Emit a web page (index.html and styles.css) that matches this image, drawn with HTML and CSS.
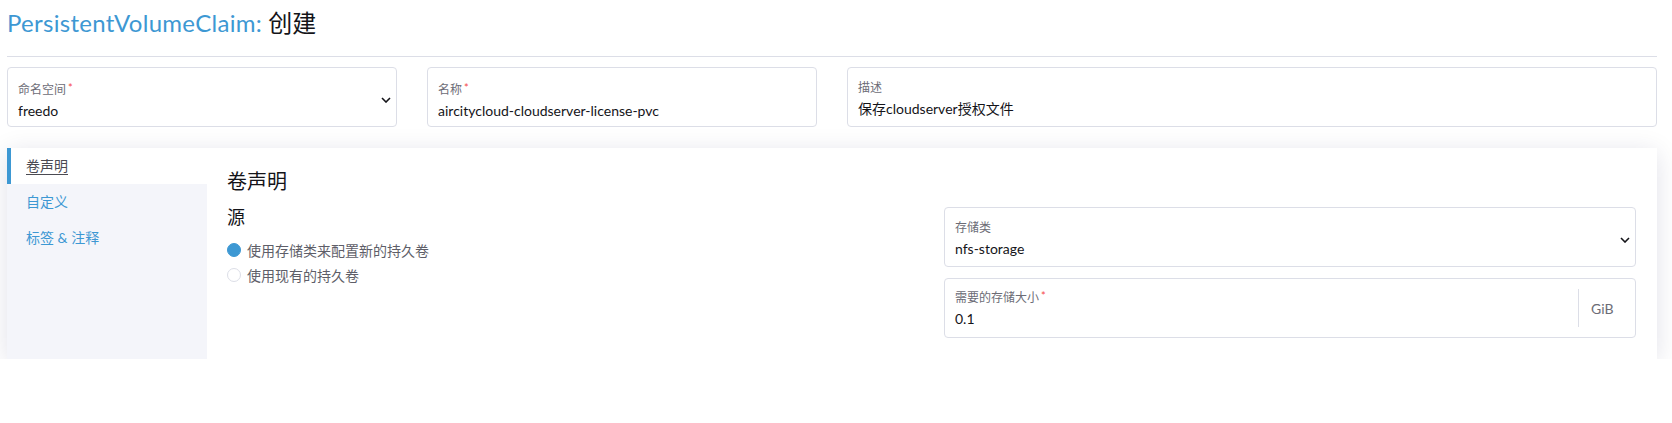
FILE: index.html
```html
<!DOCTYPE html>
<html lang="zh">
<head>
<meta charset="utf-8">
<title>PersistentVolumeClaim: 创建</title>
<link rel="stylesheet" href="styles.css">
</head>
<body>
<div class="page">
  <h1 class="title"><span class="crumb">PersistentVolumeClaim:</span> 创建</h1>
  <hr class="rule">
  <div class="top-row">
    <div class="field select">
      <div class="field-body">
        <div class="label">命名空间<span class="req">*</span></div>
        <div class="value">freedo</div>
      </div>
      <svg class="chev" width="10" height="6" viewBox="0 0 10 6"><polyline points="1,1 5,5 9,1" fill="none" stroke="#141419" stroke-width="1.6"/></svg>
    </div>
    <div class="field">
      <div class="field-body">
        <div class="label">名称<span class="req">*</span></div>
        <div class="value">aircitycloud-cloudserver-license-pvc</div>
      </div>
    </div>
    <div class="field wide">
      <div class="field-body">
        <div class="label">描述</div>
        <div class="value">保存cloudserver授权文件</div>
      </div>
    </div>
  </div>

  <div class="panel">
    <ul class="tabs">
      <li class="tab active"><span>卷声明</span></li>
      <li class="tab">自定义</li>
      <li class="tab">标签 &amp; 注释</li>
    </ul>
    <div class="content">
      <h2 class="section-title">卷声明</h2>
      <div class="cols">
        <div class="col-left">
          <h3 class="sub-title">源</h3>
          <div class="radio-row"><span class="radio checked"></span><span class="radio-label">使用存储类来配置新的持久卷</span></div>
          <div class="radio-row"><span class="radio"></span><span class="radio-label">使用现有的持久卷</span></div>
        </div>
        <div class="col-right">
          <div class="field select">
            <div class="field-body">
              <div class="label">存储类</div>
              <div class="value">nfs-storage</div>
            </div>
            <svg class="chev" width="10" height="6" viewBox="0 0 10 6"><polyline points="1,1 5,5 9,1" fill="none" stroke="#141419" stroke-width="1.6"/></svg>
          </div>
          <div class="field with-addon">
            <div class="field-body tight">
              <div class="label">需要的存储大小<span class="req">*</span></div>
              <div class="value">0.1</div>
            </div>
            <div class="addon">GiB</div>
          </div>
        </div>
      </div>
    </div>
  </div>
</div>
</body>
</html>
```

FILE: styles.css
```css
* { box-sizing: border-box; }

html, body {
  margin: 0;
  padding: 0;
  background: #ffffff;
}

body {
  font-family: Lato, "Noto Sans CJK SC", sans-serif;
  color: #141419;
  font-size: 14px;
}

.page {
  padding: 8px 15px 0 7px;
}

.title {
  margin: 0;
  font-size: 24px;
  line-height: 29px;
  font-weight: 400;
  color: #141419;
}

.crumb {
  color: #3d98d3;
  letter-spacing: 0.3px;
}

.rule {
  border: 0;
  height: 1px;
  background: #dcdee7;
  margin: 19px 0 10px;
}

.top-row {
  display: grid;
  grid-template-columns: repeat(4, 1fr);
  gap: 30px;
}

.field {
  display: flex;
  height: 60px;
  border: 1px solid #dcdee7;
  border-radius: 4px;
  background: #fff;
}

.field.wide {
  grid-column: span 2;
}

.field-body {
  flex: 1;
  padding: 12px 10px 0 10px;
  min-width: 0;
}

.field-body.tight {
  padding-top: 9px;
}

.label {
  font-size: 12px;
  line-height: 15px;
  color: #6c6c76;
}

.req {
  color: #f64747;
  margin-left: 2px;
  vertical-align: 2px;
  font-size: 11px;
}

.value {
  margin-top: 4px;
  font-size: 14px;
  line-height: 20px;
  color: #141419;
  white-space: nowrap;
}

.chev {
  align-self: center;
  margin: 6px 5px 0 0;
  flex: none;
}

.addon {
  flex: none;
  width: 57px;
  margin: 10px 0;
  border-left: 1px solid #dcdee7;
  padding-left: 12px;
  display: flex;
  align-items: center;
  color: #6c6c76;
  font-size: 14px;
}

.panel {
  margin-top: 21px;
  display: flex;
  background: #fff;
  box-shadow: 0 4px 24px rgba(20, 20, 70, 0.12);
}

.tabs {
  list-style: none;
  margin: 0;
  padding: 0;
  width: 200px;
  flex: none;
  background: #f4f5fa;
}

.tab {
  height: 36px;
  line-height: 36px;
  padding-left: 15px;
  border-left: 4px solid transparent;
  color: #3d98d3;
  font-size: 14px;
}

.tab.active {
  background: #fff;
  border-left-color: #3d98d3;
  color: #4a4a52;
}

.tab.active span {
  text-decoration: underline;
  text-underline-offset: 3px;
}

.content {
  flex: 1;
  padding: 20px 21px 21px 20px;
}

.section-title {
  margin: 0 0 13px;
  font-size: 20px;
  line-height: 26px;
  font-weight: 400;
}

.cols {
  display: grid;
  grid-template-columns: 1fr 1fr;
  gap: 25px;
}

.sub-title {
  margin: 0 0 9px;
  font-size: 18px;
  line-height: 21px;
  font-weight: 400;
}

.radio-row {
  display: flex;
  align-items: center;
  height: 25px;
}

.radio {
  width: 14px;
  height: 14px;
  border-radius: 50%;
  border: 1px solid #dcdee7;
  background: #fff;
  margin-right: 6px;
  flex: none;
}

.radio.checked {
  background: #3d98d3;
  border-color: #3d98d3;
}

.radio-label {
  color: #5e5e68;
  font-size: 14px;
}

.col-right {
  display: flex;
  flex-direction: column;
  gap: 11px;
}
```
